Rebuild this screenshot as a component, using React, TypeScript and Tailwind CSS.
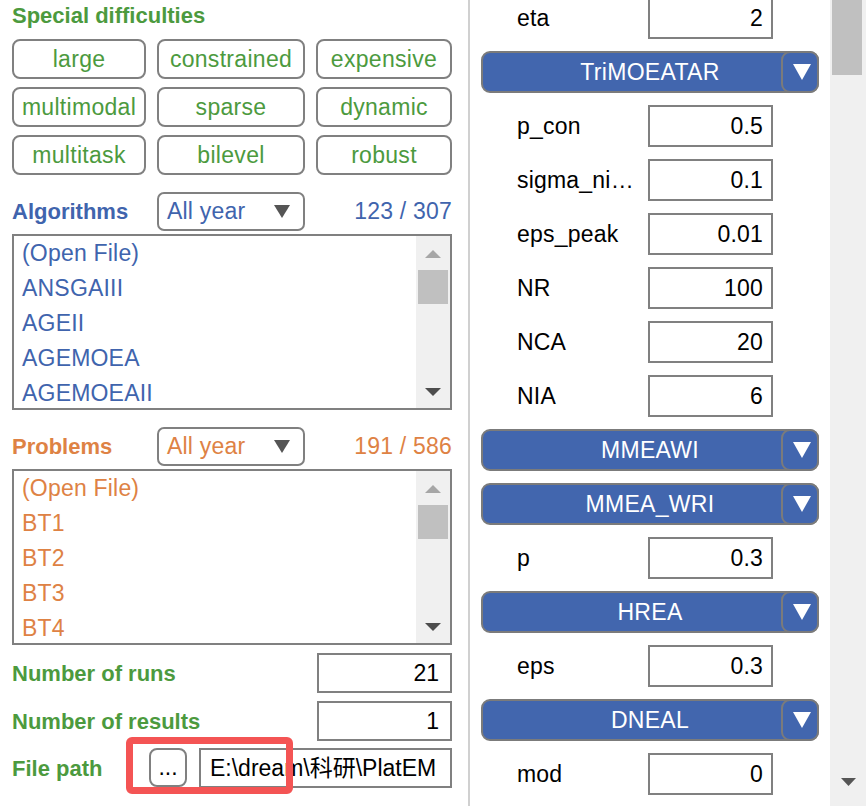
import React from 'react';

const DIFFICULTIES = [
  'large', 'constrained', 'expensive',
  'multimodal', 'sparse', 'dynamic',
  'multitask', 'bilevel', 'robust',
];

const ALGORITHMS = ['(Open File)', 'ANSGAIII', 'AGEII', 'AGEMOEA', 'AGEMOEAII'];
const PROBLEMS = ['(Open File)', 'BT1', 'BT2', 'BT3', 'BT4'];

type Entry =
  | { kind: 'param'; label: string; value: string }
  | { kind: 'algo'; name: string };

const PARAMS: Entry[] = [
  { kind: 'param', label: 'eta', value: '2' },
  { kind: 'algo', name: 'TriMOEATAR' },
  { kind: 'param', label: 'p_con', value: '0.5' },
  { kind: 'param', label: 'sigma_ni…', value: '0.1' },
  { kind: 'param', label: 'eps_peak', value: '0.01' },
  { kind: 'param', label: 'NR', value: '100' },
  { kind: 'param', label: 'NCA', value: '20' },
  { kind: 'param', label: 'NIA', value: '6' },
  { kind: 'algo', name: 'MMEAWI' },
  { kind: 'algo', name: 'MMEA_WRI' },
  { kind: 'param', label: 'p', value: '0.3' },
  { kind: 'algo', name: 'HREA' },
  { kind: 'param', label: 'eps', value: '0.3' },
  { kind: 'algo', name: 'DNEAL' },
  { kind: 'param', label: 'mod', value: '0' },
];

const Triangle = ({ w, h, fill, up = false }: { w: number; h: number; fill: string; up?: boolean }) => (
  <svg width={w} height={h} viewBox={`0 0 ${w} ${h}`}>
    <polygon points={up ? `0,${h} ${w},${h} ${w / 2},0` : `0,0 ${w},0 ${w / 2},${h}`} fill={fill} />
  </svg>
);

// header row: bold title, year filter, counter
const SectionHeader = ({ title, count, color }: { title: string; count: string; color: string }) => (
  <div className={`mt-[17px] grid h-[35px] grid-cols-[134px_148px_136px] items-center gap-x-[11px] ${color}`}>
    <span className="text-[22px] font-bold">{title}</span>
    <div className="flex h-full items-center rounded-[7px] border-2 border-[#808080] pl-[8px] pr-[13px]">
      <span className="text-[23px] tracking-[0.2px]">All year</span>
      <span className="ml-auto flex">
        <Triangle w={16} h={13} fill="#555555" />
      </span>
    </div>
    <span className="text-right text-[23px] tracking-[0.2px]">{count}</span>
  </div>
);

const ListBox = ({ items, color }: { items: string[]; color: string }) => (
  <div className="mt-[7px] flex h-[176px] border-2 border-[#808080]">
    <div className={`flex-1 overflow-hidden pl-[8px] ${color}`}>
      {items.map((it) => (
        <div key={it} className="h-[35px] text-[23px] leading-[35px] tracking-[0.2px]">{it}</div>
      ))}
    </div>
    <div className="flex w-[34px] flex-col bg-[#f0f0f0]">
      <div className="flex h-[34px] items-center justify-center pt-[2px]">
        <Triangle w={16} h={8} fill="#a6a6a6" up />
      </div>
      <div className="mx-[2px] h-[34px] bg-[#c0c0c0]" />
      <div className="flex-1" />
      <div className="flex h-[34px] items-center justify-center pt-[2px]">
        <Triangle w={16} h={8} fill="#4d4d4d" />
      </div>
    </div>
  </div>
);

const NumberRow = ({ label, value }: { label: string; value: string }) => (
  <div className="mt-[8px] flex h-[40px] items-center">
    <span className="flex-1 text-[22px] font-bold text-[#4c9a3e]">{label}</span>
    <div className="flex h-full w-[135px] items-center justify-end border-2 border-[#808080] pr-[11px] text-[23px] text-black">
      {value}
    </div>
  </div>
);

const AlgoBar = ({ name }: { name: string }) => (
  <div className="relative ml-[11px] flex h-[42px] w-[338px] shrink-0 items-center justify-center rounded-[9px] border-2 border-[#7b7b7b] bg-[#4266ae] text-[23px] tracking-[0.3px] text-white">
    {name}
    <div className="absolute -right-[2px] -top-[2px] flex h-[42px] w-[38px] items-center justify-center rounded-[9px] border-2 border-[#7b7b7b] bg-[#4266ae] pl-[4px]">
      <Triangle w={18} h={16} fill="#ffffff" />
    </div>
  </div>
);

const ParamRow = ({ label, value }: { label: string; value: string }) => (
  <div className="flex h-[42px] shrink-0 items-center pl-[47px] text-black">
    <span className="w-[131px] truncate pr-[9px] text-[23px] tracking-[0.2px]">{label}</span>
    <div className="flex h-full w-[125px] items-center justify-end border-2 border-[#808080] pr-[8px] text-[23px] tracking-[0.2px]">
      {value}
    </div>
  </div>
);

export default function App() {
  return (
    <div className="relative flex h-[806px] w-[866px] overflow-hidden bg-white font-['Liberation_Sans','Noto_Sans_CJK_SC',Arial,sans-serif]">
      {/* left column: filters and lists */}
      <div className="flex w-[468px] shrink-0 flex-col pl-[12px] pr-[16px]">
        <div className="mt-[3px] h-[26px] text-[22px] font-bold leading-[26px] text-[#4c9a3e]">Special difficulties</div>
        <div className="mt-[10px] grid grid-cols-[134px_148px_136px] gap-x-[11px] gap-y-[8px]">
          {DIFFICULTIES.map((d) => (
            <div
              key={d}
              className="flex h-[40px] items-center justify-center rounded-[8px] border-2 border-[#808080] text-[23px] tracking-[0.3px] text-[#4c9a3e]"
            >
              {d}
            </div>
          ))}
        </div>

        <SectionHeader title="Algorithms" count="123 / 307" color="text-[#4064ad]" />
        <ListBox items={ALGORITHMS} color="text-[#4064ad]" />

        <SectionHeader title="Problems" count="191 / 586" color="text-[#de8244]" />
        <ListBox items={PROBLEMS} color="text-[#de8244]" />

        <NumberRow label="Number of runs" value="21" />
        <NumberRow label="Number of results" value="1" />

        <div className="mt-[7px] flex h-[40px] items-center">
          <span className="w-[137px] text-[22px] font-bold text-[#4c9a3e]">File path</span>
          <div className="flex h-[39px] w-[38px] items-end justify-center self-start rounded-[8px] border-2 border-[#808080] pb-[6px] text-[23px] leading-none text-black">
            ...
          </div>
          <div className="ml-[12px] flex h-full flex-1 items-center overflow-hidden whitespace-nowrap border-2 border-[#808080] pl-[9px] text-[23px] text-black">
            E:\dream\科研\PlatEM
          </div>
        </div>
      </div>

      {/* right column: parameter settings */}
      <div className="flex flex-1 border-l-2 border-[#d0d0d0]">
        <div className="flex w-[360px] flex-col overflow-hidden">
          <div className="-mt-[3px] flex flex-col gap-[12px]">
            {PARAMS.map((p, i) =>
              p.kind === 'algo' ? (
                <AlgoBar key={i} name={p.name} />
              ) : (
                <ParamRow key={i} label={p.label} value={p.value} />
              ),
            )}
          </div>
        </div>
        <div className="flex w-[36px] flex-col bg-[#f0f0f0]">
          <div className="ml-[2px] h-[75px] w-[30px] bg-[#c0c0c0]" />
          <div className="flex-1" />
          <div className="mb-[6px] flex h-[36px] items-center justify-center">
            <Triangle w={15} h={8} fill="#555555" />
          </div>
        </div>
      </div>

      {/* highlight around the path picker */}
      <div className="pointer-events-none absolute left-[126px] top-[737px] h-[57px] w-[167px] rounded-[6px] border-[7px] border-[#f45454]" />
    </div>
  );
}
